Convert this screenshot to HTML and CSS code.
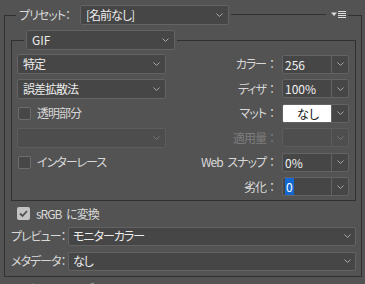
FILE: index.html
```html
<!DOCTYPE html>
<html lang="ja">
<head>
<meta charset="utf-8">
<title>最適化</title>
<link rel="stylesheet" href="styles.css">
</head>
<body>
<div class="panel">
  <fieldset class="group outer">
    <legend class="outer-head">
      <span class="head-label">プリセット：</span>
      <div class="select preset"><span class="val">[名前なし]</span><svg class="chev" viewBox="0 0 7 4" width="7" height="4"><polyline points="0.5,0.5 3.5,3.5 6.5,0.5"/></svg></div>
      <span class="rule"></span>
      <svg class="menu-icon" viewBox="0 0 15 8" width="15" height="8"><polygon points="0,1.5 6,1.5 3,5"/><rect x="7" y="0" width="8" height="1"/><rect x="7" y="2" width="8" height="1"/><rect x="7" y="4" width="8" height="1"/><rect x="7" y="6" width="8" height="1"/></svg>
    </legend>

    <fieldset class="group inner">
      <legend class="inner-head">
        <div class="select fmt"><span class="val">GIF</span><svg class="chev" viewBox="0 0 7 4" width="7" height="4"><polyline points="0.5,0.5 3.5,3.5 6.5,0.5"/></svg></div>
      </legend>

      <div class="opts">
        <div class="select"><span class="val">特定</span><svg class="chev" viewBox="0 0 7 4" width="7" height="4"><polyline points="0.5,0.5 3.5,3.5 6.5,0.5"/></svg></div>
        <span class="lbl">カラー<span class="colon">：</span></span>
        <div class="combo"><span class="cval">256</span><span class="cbtn"><svg class="chev" viewBox="0 0 7 4" width="7" height="4"><polyline points="0.5,0.5 3.5,3.5 6.5,0.5"/></svg></span></div>

        <div class="select"><span class="val">誤差拡散法</span><svg class="chev" viewBox="0 0 7 4" width="7" height="4"><polyline points="0.5,0.5 3.5,3.5 6.5,0.5"/></svg></div>
        <span class="lbl">ディザ<span class="colon">：</span></span>
        <div class="combo"><span class="cval">100%</span><span class="cbtn"><svg class="chev" viewBox="0 0 7 4" width="7" height="4"><polyline points="0.5,0.5 3.5,3.5 6.5,0.5"/></svg></span></div>

        <div class="check-row"><span class="box"></span><span class="ctext">透明部分</span></div>
        <span class="lbl">マット<span class="colon">：</span></span>
        <div class="combo"><span class="cval matte">なし</span><span class="cbtn"><svg class="chev" viewBox="0 0 7 4" width="7" height="4"><polyline points="0.5,0.5 3.5,3.5 6.5,0.5"/></svg></span></div>

        <div class="select disabled"><span class="val"></span><svg class="chev" viewBox="0 0 7 4" width="7" height="4"><polyline points="0.5,0.5 3.5,3.5 6.5,0.5"/></svg></div>
        <span class="lbl dim">適用量<span class="colon">：</span></span>
        <div class="combo disabled"><span class="cval"></span><span class="cbtn"><svg class="chev" viewBox="0 0 7 4" width="7" height="4"><polyline points="0.5,0.5 3.5,3.5 6.5,0.5"/></svg></span></div>

        <div class="check-row"><span class="box"></span><span class="ctext">インターレース</span></div>
        <span class="lbl">Web スナップ<span class="colon">：</span></span>
        <div class="combo"><span class="cval">0%</span><span class="cbtn"><svg class="chev" viewBox="0 0 7 4" width="7" height="4"><polyline points="0.5,0.5 3.5,3.5 6.5,0.5"/></svg></span></div>

        <div class="empty"></div>
        <span class="lbl">劣化<span class="colon">：</span></span>
        <div class="combo"><span class="cval"><span class="sel">0</span></span><span class="cbtn"><svg class="chev" viewBox="0 0 7 4" width="7" height="4"><polyline points="0.5,0.5 3.5,3.5 6.5,0.5"/></svg></span></div>
      </div>
    </fieldset>

    <div class="check-row srgb"><span class="box checked"><svg viewBox="0 0 13 13" width="13" height="13"><polyline points="3,6.5 5.5,9 10,4"/></svg></span><span class="ctext">sRGB に変換</span></div>

    <div class="field-row first">
      <span class="flabel">プレビュー：</span>
      <div class="select wide"><span class="val">モニターカラー</span><svg class="chev" viewBox="0 0 7 4" width="7" height="4"><polyline points="0.5,0.5 3.5,3.5 6.5,0.5"/></svg></div>
    </div>
    <div class="field-row">
      <span class="flabel">メタデータ：</span>
      <div class="select wide"><span class="val">なし</span><svg class="chev" viewBox="0 0 7 4" width="7" height="4"><polyline points="0.5,0.5 3.5,3.5 6.5,0.5"/></svg></div>
    </div>
  </fieldset>

  <div class="next-head">▼ カラーテーブル</div>
</div>
</body>
</html>
```

FILE: styles.css
```css
* { box-sizing: border-box; }

html, body {
  margin: 0;
  background: #535353;
}

body {
  width: 365px;
  height: 284px;
  overflow: hidden;
  font-family: "Noto Sans CJK JP", "Noto Sans", sans-serif;
  font-size: 12px;
  line-height: 18px;
  color: #d8d8d8;
  font-feature-settings: "palt";
}

.panel {
  padding: 5px 3px 0 4px;
}

fieldset.group {
  margin: 0;
  min-width: 0;
  border: 1px solid #303030;
}

.outer {
  padding: 5px 5px 5px 6px;
}

.outer-head {
  display: flex;
  align-items: center;
  width: 332px;
  height: 20px;
  margin-left: 5px;
  padding: 0 2px 0 3px;
}

.head-label,
.lbl,
.flabel,
.ctext,
.select .val {
  letter-spacing: -1px;
  word-spacing: 3px;
}

.lbl .colon {
  font-feature-settings: normal;
  letter-spacing: 0;
}

.head-label {
  width: 61px;
  flex: none;
  white-space: nowrap;
}

.rule {
  flex: 1;
  height: 20px;
  margin-left: 2px;
  background: linear-gradient(#303030, #303030) 0 9px / 100% 1px no-repeat;
}

.menu-icon {
  flex: none;
  margin-left: 5px;
  fill: #dcdcdc;
}

/* dropdowns */
.select {
  display: flex;
  align-items: center;
  width: 149px;
  height: 20px;
  padding: 0 5px 0 5px;
  background: #464646;
  border: 1px solid #636363;
  border-radius: 2px;
  color: #ececec;
  flex: none;
}

.select .val {
  flex: 1;
  white-space: nowrap;
}

.fmt .val {
  letter-spacing: 0;
}

.chev {
  flex: none;
  fill: none;
  stroke: #a8a8a8;
  stroke-width: 1;
}

.select.disabled {
  background: #4d4d4d;
  border-color: #5c5c5c;
}

.select.disabled .chev,
.combo.disabled .chev {
  stroke: #767676;
}

.inner {
  padding: 4px 6px 3px 5px;
}

.inner-head {
  margin-left: 7px;
  padding: 0 2px;
}

.opts {
  display: grid;
  grid-template-columns: 149px 1fr 67px;
  grid-auto-rows: 20px;
  row-gap: 4.6px;
  column-gap: 4px;
  align-items: center;
}

.lbl {
  text-align: right;
  white-space: nowrap;
}

.lbl.dim {
  color: #7c7c7c;
}

.combo {
  display: flex;
  height: 19px;
  border: 1px solid #636363;
  border-radius: 2px;
  background: #464646;
  overflow: hidden;
}

.combo .cval {
  flex: 1;
  padding-left: 2px;
  color: #f0f0f0;
  line-height: 17px;
  white-space: nowrap;
}

.combo .cval.matte {
  background: #ffffff;
  color: #111111;
  text-align: center;
}

.cbtn {
  width: 17px;
  flex: none;
  border-left: 1px solid #636363;
  display: flex;
  align-items: center;
  justify-content: center;
}

.combo.disabled {
  background: #4e4e4e;
  border-color: #5c5c5c;
}

.combo.disabled .cbtn {
  border-left-color: #5c5c5c;
}

.sel {
  background: #1268d0;
  color: #ffffff;
  padding: 0 1px;
}

/* checkboxes */
.check-row {
  display: flex;
  align-items: center;
  height: 20px;
}

.box {
  width: 13px;
  height: 13px;
  margin-left: 1px;
  margin-right: 6px;
  flex: none;
  border: 1px solid #6c6c6c;
  border-radius: 2px;
  background: #474747;
}

.box.checked {
  border: none;
  background: #c4c4c4;
  display: flex;
}

.box.checked svg {
  fill: none;
  stroke: #505050;
  stroke-width: 1.8;
}

.ctext {
  white-space: nowrap;
}

.srgb {
  margin-top: 3px;
  margin-left: 6px;
}

.srgb .box {
  margin-left: 0;
}

/* bottom rows */
.field-row {
  display: flex;
  align-items: center;
  margin-top: 6px;
}

.field-row.first {
  margin-top: 3px;
}

.flabel {
  width: 57px;
  flex: none;
  white-space: nowrap;
}

.select.wide {
  flex: 1;
  width: auto;
  height: 19px;
  padding-left: 4px;
  padding-right: 4px;
}

.next-head {
  margin-top: 3px;
  padding-left: 9px;
  white-space: nowrap;
}
```
